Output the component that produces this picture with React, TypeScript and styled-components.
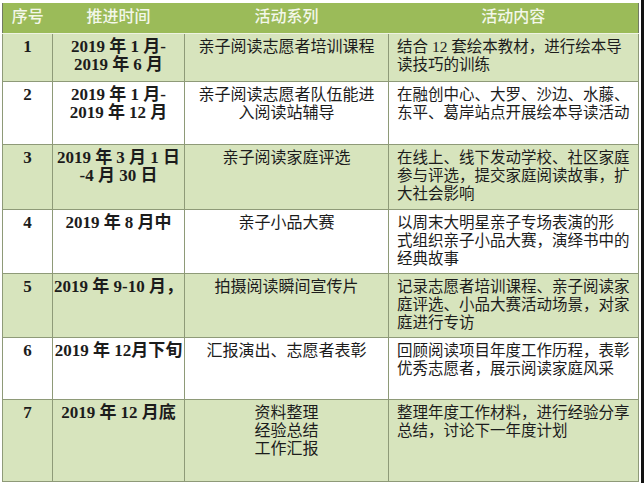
import React from "react";
import styled, { createGlobalStyle } from "styled-components";

const GlobalStyle = createGlobalStyle`
  html, body {
    margin: 0;
    padding: 0;
    background: #ffffff;
  }
`;

const GREEN = "#9bbb59";
const LIGHT = "#d7e4bd";
const LINE = "#8e9a78";
const OUTER = "#717a62";

const Page = styled.div`
  display: flex;
  align-items: flex-start;
  width: 644px;
  height: 486px;
  overflow: hidden;
`;

const Table = styled.table`
  margin: 3px 0 0 2px;
  width: 636px;
  table-layout: fixed;
  border-collapse: collapse;
  font-family: "Liberation Serif", "Noto Sans CJK SC", serif;
  color: #1c1c1c;
  border-left: 1px solid ${OUTER};
  border-right: 1px solid ${OUTER};
  border-bottom: 1px solid ${OUTER};
`;

const Strip = styled.div`
  margin-left: 2px;
  width: 4px;
  height: 483px;
  background: #111111;
`;

const HeadRow = styled.tr`
  height: 30px;
  background: ${GREEN};
`;

const HeadCell = styled.th`
  padding: 3px 0 0;
  vertical-align: top;
  text-align: center;
  font-family: "Noto Sans CJK SC", serif;
  font-size: 16px;
  font-weight: 500;
  line-height: 18px;
  color: #f3f7ea;
  border-bottom: 1px solid #eef3e2;
`;

const Row = styled.tr<{ $h: number; $shade: boolean }>`
  height: ${(p) => p.$h}px;
  background: ${(p) => (p.$shade ? LIGHT : "#ffffff")};
`;

const Cell = styled.td<{ $align?: "left" | "center"; $bold?: boolean; $size?: number }>`
  padding: 4px ${(p) => (p.$align === "left" ? "4px 0 8px" : "0")};
  vertical-align: top;
  text-align: ${(p) => p.$align ?? "center"};
  font-size: ${(p) => p.$size ?? 16}px;
  font-weight: ${(p) => (p.$bold ? 700 : 400)};
  line-height: 18px;
  border: 1px solid ${LINE};
  white-space: nowrap;
  overflow: visible;
`;

const Line = styled.div`
  white-space: nowrap;
`;

interface Plan {
  no: string;
  time: string[];
  series: string[];
  content: string[];
  h: number;
}

const plans: Plan[] = [
  {
    no: "1",
    time: ["2019 年 1 月-", "2019 年 6 月"],
    series: ["亲子阅读志愿者培训课程"],
    content: ["结合 12 套绘本教材，进行绘本导", "读技巧的训练"],
    h: 48,
  },
  {
    no: "2",
    time: ["2019 年 1 月-", "2019 年 12 月"],
    series: ["亲子阅读志愿者队伍能进", "入阅读站辅导"],
    content: ["在融创中心、大罗、沙边、水藤、", "东平、葛岸站点开展绘本导读活动"],
    h: 63,
  },
  {
    no: "3",
    time: ["2019 年 3 月 1 日", "-4 月 30 日"],
    series: ["亲子阅读家庭评选"],
    content: ["在线上、线下发动学校、社区家庭", "参与评选，提交家庭阅读故事，扩", "大社会影响"],
    h: 65,
  },
  {
    no: "4",
    time: ["2019 年 8 月中"],
    series: ["亲子小品大赛"],
    content: ["以周末大明星亲子专场表演的形", "式组织亲子小品大赛，演绎书中的", "经典故事"],
    h: 64,
  },
  {
    no: "5",
    time: ["2019 年 9-10 月，"],
    series: ["拍摄阅读瞬间宣传片"],
    content: ["记录志愿者培训课程、亲子阅读家", "庭评选、小品大赛活动场景，对家", "庭进行专访"],
    h: 64,
  },
  {
    no: "6",
    time: ["2019 年 12月下旬"],
    series: ["汇报演出、志愿者表彰"],
    content: ["回顾阅读项目年度工作历程，表彰", "优秀志愿者，展示阅读家庭风采"],
    h: 62,
  },
  {
    no: "7",
    time: ["2019 年 12 月底"],
    series: ["资料整理", "经验总结", "工作汇报"],
    content: ["整理年度工作材料，进行经验分享", "总结，讨论下一年度计划"],
    h: 82,
  },
];

const Lines = ({ items }: { items: string[] }) => (
  <>
    {items.map((t) => (
      <Line key={t}>{t}</Line>
    ))}
  </>
);

export default function App() {
  return (
    <Page>
      <GlobalStyle />
      <Table>
        <colgroup>
          <col style={{ width: 50 }} />
          <col style={{ width: 132 }} />
          <col style={{ width: 204 }} />
          <col style={{ width: 250 }} />
        </colgroup>
        <thead>
          <HeadRow>
            <HeadCell>序号</HeadCell>
            <HeadCell>推进时间</HeadCell>
            <HeadCell>活动系列</HeadCell>
            <HeadCell>活动内容</HeadCell>
          </HeadRow>
        </thead>
        <tbody>
          {plans.map((p, i) => (
            <Row key={p.no} $h={p.h} $shade={i % 2 === 0}>
              <Cell $bold $size={17}>{p.no}</Cell>
              <Cell $bold $size={17}>
                <Lines items={p.time} />
              </Cell>
              <Cell>
                <Lines items={p.series} />
              </Cell>
              <Cell $align="left" $size={15.5}>
                <Lines items={p.content} />
              </Cell>
            </Row>
          ))}
        </tbody>
      </Table>
      <Strip />
    </Page>
  );
}
